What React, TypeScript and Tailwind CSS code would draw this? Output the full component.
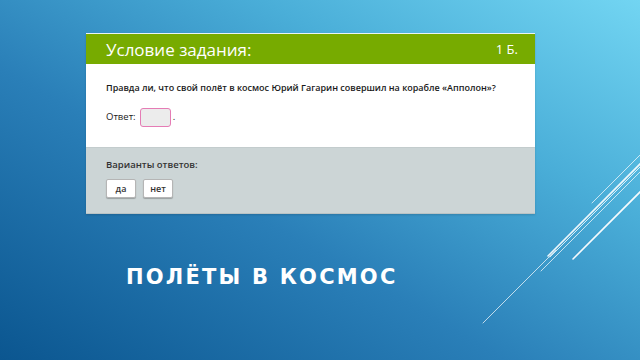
import React from "react";

export default function App() {
  return (
    <div
      className="relative w-[640px] h-[360px] overflow-hidden bg-[linear-gradient(30deg,#0b5690_0%,#2a7fb8_40%,#4aaed8_70%,#72d5f2_100%)]"
      style={{ fontFamily: '"Open Sans", "Noto Sans", sans-serif' }}
    >
      <svg className="absolute inset-0" width="640" height="360" viewBox="0 0 640 360">
        <g stroke="#ffffff" strokeLinecap="round" fill="none">
          <line x1="592" y1="203" x2="645" y2="150" strokeWidth="1" strokeOpacity="0.7" />
          <line x1="548" y1="256" x2="645" y2="159" strokeWidth="1.6" strokeOpacity="0.9" />
          <line x1="550" y1="257" x2="645" y2="162" strokeWidth="1" strokeOpacity="0.8" />
          <line x1="541" y1="271" x2="645" y2="167" strokeWidth="1" strokeOpacity="0.7" />
          <line x1="573" y1="259" x2="645" y2="187" strokeWidth="1.6" strokeOpacity="0.95" />
          <line x1="483" y1="323" x2="556" y2="250" strokeWidth="1" strokeOpacity="0.7" />
        </g>
      </svg>

      <div className="relative pt-[33px] pl-[86px]">
        <div className="w-[449px] border-t border-[#e8f4f8] shadow-[0_1px_2px_rgba(0,0,0,0.15)]">
          <div className="h-[30px] bg-[#77ab00] flex items-center justify-between pl-[20px] pr-[17px] text-white">
            <span className="text-[17px] leading-none">Условие задания:</span>
            <span className="text-[13px] leading-none">1 Б.</span>
          </div>
          <div className="h-[84px] bg-white pl-[20px] pt-[17px] border-b border-[#c3cccd]">
            <div className="text-[9px] font-semibold text-[#1a1a1a] leading-[14px]">
              Правда ли, что свой полёт в космос Юрий Гагарин совершил на корабле «Апполон»?
            </div>
            <div className="mt-[13px] flex items-center text-[9.5px] text-[#1a1a1a]">
              <span>Ответ:</span>
              <span className="ml-[4px] w-[31px] h-[19px] rounded-[3px] border border-[#e57cb5] bg-[#ececec]"></span>
              <span className="ml-[2px]">.</span>
            </div>
          </div>
          <div className="h-[66px] bg-[#ccd5d6] pl-[20px] pt-[10px] border-b border-[#b9c3c5]">
            <div className="text-[9.5px] font-semibold text-[#333] leading-[14px]">Варианты ответов:</div>
            <div className="mt-[7px] flex gap-[7px]">
              <div className="w-[30px] h-[19px] bg-white border border-[#b5b5b5] rounded-[2px] shadow-[0_1px_1px_rgba(0,0,0,0.25)] flex items-center justify-center text-[9px] font-semibold text-[#333]">
                да
              </div>
              <div className="w-[30px] h-[19px] bg-white border border-[#b5b5b5] rounded-[2px] shadow-[0_1px_1px_rgba(0,0,0,0.25)] flex items-center justify-center text-[9px] font-semibold text-[#333]">
                нет
              </div>
            </div>
          </div>
        </div>
        <div
          className="ml-[40px] mt-[53px] text-white font-bold text-[21px] leading-none tracking-[2.2px]"
          style={{ fontFamily: '"DejaVu Sans", "Noto Sans", sans-serif' }}
        >
          ПОЛЁТЫ В КОСМОС
        </div>
      </div>
    </div>
  );
}
